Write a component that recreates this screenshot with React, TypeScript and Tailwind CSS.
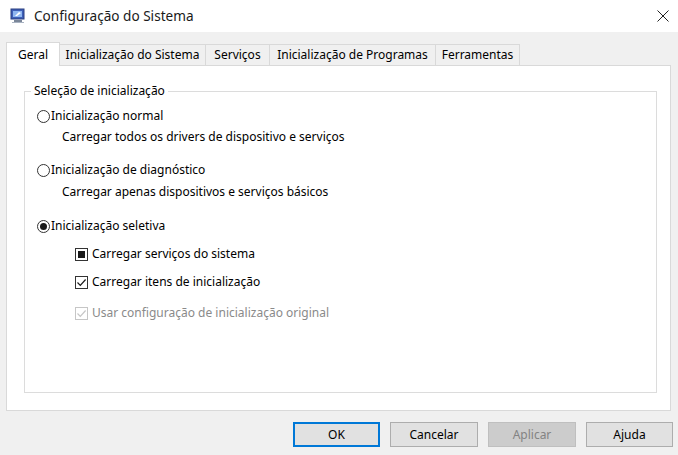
import React from "react";

const font = { fontFamily: '"Noto Sans", "Open Sans", sans-serif' };

const AppIcon = () => (
  <svg width="16" height="16" viewBox="0 0 16 16">
    <rect x="1" y="1" width="13" height="10" fill="#3d5fb8" stroke="#2a3f80" strokeWidth="1" />
    <rect x="3" y="3" width="9" height="6" fill="#8fb6f0" />
    <path d="M5 8 L9 4 L11 5 L7 8 Z" fill="#ffffff" />
    <rect x="4" y="12" width="8" height="2" fill="#7a8699" />
    <rect x="2" y="14" width="12" height="1" fill="#a9b3c2" />
  </svg>
);

const Radio = ({ checked }: { checked?: boolean }) => (
  <span className="w-[13px] h-[13px] rounded-full border border-[#333] bg-white flex items-center justify-center shrink-0">
    {checked && <span className="w-[7px] h-[7px] rounded-full bg-[#1a1a1a]" />}
  </span>
);

const Check = ({ state, disabled }: { state: "mixed" | "on"; disabled?: boolean }) => (
  <span
    className={`w-[13px] h-[13px] border bg-white flex items-center justify-center shrink-0 ${
      disabled ? "border-[#c6c6c6]" : "border-[#333]"
    }`}
  >
    {state === "mixed" ? (
      <span className="w-[7px] h-[7px] bg-[#1a1a1a]" />
    ) : (
      <svg width="11" height="11" viewBox="0 0 11 11">
        <path
          d="M1.5 5.5 L4.3 8.3 L9.6 2.5"
          fill="none"
          stroke={disabled ? "#c6c6c6" : "#1a1a1a"}
          strokeWidth="1.2"
        />
      </svg>
    )}
  </span>
);

const tabs = [
  { label: "Inicialização do Sistema", w: "w-[146px]" },
  { label: "Serviços", w: "w-[64px]" },
  { label: "Inicialização de Programas", w: "w-[166px]" },
  { label: "Ferramentas", w: "w-[84px]" },
];

export default function App() {
  return (
    <div className="w-[678px] h-[455px] flex flex-col bg-[#f0f0f0] text-[12px] text-black" style={font}>
      {/* Title bar */}
      <div className="h-[32px] bg-white flex items-center shrink-0">
        <div className="ml-[10px] mr-[8px] flex items-center">
          <AppIcon />
        </div>
        <span className="text-[13.6px] text-[#1a1a1a]">Configuração do Sistema</span>
        <svg className="ml-auto mr-[9px]" width="12" height="12" viewBox="0 0 12 12">
          <path d="M0.5 0.5 L11.5 11.5 M11.5 0.5 L0.5 11.5" stroke="#222" strokeWidth="1" />
        </svg>
      </div>

      {/* Tabs */}
      <div className="flex items-end pl-[6px] h-[33px] shrink-0">
        <div className="relative z-10 -mb-px w-[54px] h-[24px] flex items-center justify-center bg-white border border-b-0 border-[#d9d9d9]">
          Geral
        </div>
        {tabs.map((t) => (
          <div
            key={t.label}
            className={`${t.w} h-[21px] flex items-center justify-center bg-[#f0f0f0] border border-l-0 border-b-0 border-[#d9d9d9]`}
          >
            {t.label}
          </div>
        ))}
      </div>

      {/* Panel */}
      <div className="ml-[6px] mr-[7px] h-[346px] bg-white border border-[#d9d9d9] pl-[17px] pr-[13px] pt-[25px] pb-[17px] flex flex-col shrink-0">
        <div className="relative flex-1 border border-[#dcdcdc] pt-[15px] pl-[12px] flex flex-col">
          <span className="absolute -top-[9px] left-[6px] bg-white px-[3px] leading-[16px]">
            Seleção de inicialização
          </span>

          <div className="flex items-center gap-[1px] h-[18px]">
            <Radio />
            <span>Inicialização normal</span>
          </div>
          <div className="pl-[25px] h-[18px] mt-[3px] flex items-center">
            Carregar todos os drivers de dispositivo e serviços
          </div>

          <div className="flex items-center gap-[1px] h-[18px] mt-[15px]">
            <Radio />
            <span>Inicialização de diagnóstico</span>
          </div>
          <div className="pl-[25px] h-[18px] mt-[4px] flex items-center">
            Carregar apenas dispositivos e serviços básicos
          </div>

          <div className="flex items-center gap-[1px] h-[18px] mt-[16px]">
            <Radio checked />
            <span>Inicialização seletiva</span>
          </div>

          <div className="pl-[38px] flex flex-col">
            <div className="flex items-center gap-[4px] h-[18px] mt-[10px]">
              <Check state="mixed" />
              <span>Carregar serviços do sistema</span>
            </div>
            <div className="flex items-center gap-[4px] h-[18px] mt-[10px]">
              <Check state="on" />
              <span>Carregar itens de inicialização</span>
            </div>
            <div className="flex items-center gap-[4px] h-[18px] mt-[13px] text-[#8a8a8a]">
              <Check state="on" disabled />
              <span>Usar configuração de inicialização original</span>
            </div>
          </div>
        </div>
      </div>

      {/* Buttons */}
      <div className="flex justify-end gap-[10px] pr-[5px] mt-[11px]">
        <button className="w-[87px] h-[25px] bg-[#e1e1e1] border-2 border-[#0078d7] flex items-center justify-center">
          OK
        </button>
        <button className="w-[88px] h-[25px] bg-[#e1e1e1] border border-[#adadad] flex items-center justify-center">
          Cancelar
        </button>
        <button className="w-[88px] h-[25px] bg-[#cccccc] border border-[#bfbfbf] text-[#838383] flex items-center justify-center">
          Aplicar
        </button>
        <button className="w-[87px] h-[25px] bg-[#e1e1e1] border border-[#adadad] flex items-center justify-center">
          Ajuda
        </button>
      </div>
    </div>
  );
}
